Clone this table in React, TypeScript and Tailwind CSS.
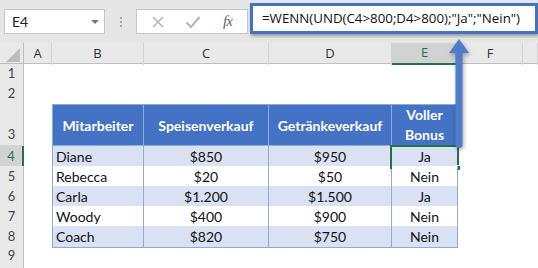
import React from "react";

const cols = "grid grid-cols-[24px_28px_92px_125px_123px_66px_65px_1fr]";
const letters = ["A", "B", "C", "D", "E", "F", ""];

const people = [
  { name: "Diane", food: "$850", drinks: "$950", bonus: "Ja" },
  { name: "Rebecca", food: "$20", drinks: "$50", bonus: "Nein" },
  { name: "Carla", food: "$1.200", drinks: "$1.500", bonus: "Ja" },
  { name: "Woody", food: "$400", drinks: "$900", bonus: "Nein" },
  { name: "Coach", food: "$820", drinks: "$750", bonus: "Nein" },
];

function RowHead({ n, active }: { n?: number; active?: boolean }) {
  return (
    <div
      className={`flex items-end justify-center pb-[1px] text-[13px] border-b border-[#d4d4d4] ${
        active
          ? "bg-[#d2d2d2] text-[#217346] border-r-2 border-r-[#217346]"
          : "bg-[#e9e9e9] text-[#444] border-r border-r-[#bdbdbd]"
      }`}
    >
      {n}
    </div>
  );
}

function Toolbar() {
  return (
    <div className="relative h-[43px] bg-[#e6e6e6] flex items-start pt-[9px] pl-[4px]">
      <div className="w-[101px] h-[25px] bg-white border border-[#c6c6c6] flex items-center justify-between pl-[7px] pr-[5px] text-[14px] text-[#222]">
        <span>E4</span>
        <span className="w-0 h-0 border-l-[4px] border-r-[4px] border-t-[4px] border-l-transparent border-r-transparent border-t-[#777]" />
      </div>
      <div className="w-[31px] h-[25px] flex flex-col items-center justify-center gap-[2px]">
        <span className="w-[2px] h-[2px] bg-[#a6a6a6]" />
        <span className="w-[2px] h-[2px] bg-[#a6a6a6]" />
        <span className="w-[2px] h-[2px] bg-[#a6a6a6]" />
      </div>
      <div className="w-[112px] h-[25px] bg-white border border-[#c6c6c6] flex items-center pl-[14px]">
        <svg width="14" height="14" viewBox="0 0 14 14" className="mr-[20px]">
          <path d="M2 2 L12 12 M12 2 L2 12" stroke="#b5b5b5" strokeWidth="1.6" />
        </svg>
        <svg width="16" height="14" viewBox="0 0 16 14" className="mr-[22px]">
          <path d="M1.5 7.5 L6 12 L14.5 2" stroke="#b5b5b5" strokeWidth="2" fill="none" />
        </svg>
        <span className="text-[15px] italic text-[#666] font-['Liberation_Serif',serif] tracking-[-1px]">
          fx
        </span>
      </div>
      {/* formula input, highlighted */}
      <div className="absolute left-[250px] top-[3px] w-[288px] h-[31px] bg-white border-[3px] border-[#4472c4] shadow-[1px_2px_3px_rgba(0,0,0,0.35)] flex items-center pl-[9px] text-[13.3px] text-[#111] font-['Open_Sans',sans-serif] whitespace-nowrap">
        =WENN(UND(C4&gt;800;D4&gt;800);"Ja";"Nein")
      </div>
    </div>
  );
}

export default function App() {
  return (
    <div className="relative w-[538px] h-[268px] overflow-hidden bg-white font-['Lato',sans-serif]">
      <Toolbar />

      {/* column letters */}
      <div className={`${cols} h-[21px] bg-[#e9e9e9] border-b border-[#bfbfbf] font-['Open_Sans',sans-serif] text-[13px] text-[#333]`}>
        <div className="relative border-r border-[#bdbdbd]">
          <svg width="14" height="14" viewBox="0 0 14 14" className="absolute right-[3px] bottom-[3px]">
            <path d="M14 0 L14 14 L0 14 Z" fill="#bdbdbd" />
          </svg>
        </div>
        {letters.map((l, i) => (
          <div
            key={i}
            className={`flex items-center justify-center border-r border-[#d4d4d4] ${
              l === "E" ? "bg-[#d2d2d2] text-[#217346] border-b-2 border-b-[#217346]" : ""
            }`}
          >
            {l}
          </div>
        ))}
      </div>

      {/* empty rows 1 and 2 */}
      {[1, 2].map((n) => (
        <div key={n} className={`${cols} h-[20px]`}>
          <RowHead n={n} />
        </div>
      ))}

      {/* table header */}
      <div className={`${cols} h-[42px]`}>
        <RowHead n={3} />
        <div />
        {["Mitarbeiter", "Speisenverkauf", "Getränkeverkauf"].map((h, i) => (
          <div
            key={h}
            className={`bg-[#4472c4] text-white font-bold text-[14px] flex items-center justify-center border-t border-r border-b border-[#8eaadb] ${
              i === 0 ? "border-l" : ""
            }`}
          >
            {h}
          </div>
        ))}
        <div className="bg-[#4472c4] text-white font-bold text-[14px] leading-[20px] flex flex-col items-center justify-center border-t border-r border-b border-[#8eaadb]">
          <span>Voller</span>
          <span>Bonus</span>
        </div>
      </div>

      {/* data rows */}
      {people.map((p, i) => {
        const bg = i % 2 === 0 ? "bg-[#d9e1f2]" : "bg-white";
        const cell = `${bg} border-r border-b border-[#8eaadb] flex items-center text-[14px] text-[#111]`;
        return (
          <div key={p.name} className={`${cols} h-[20px]`}>
            <RowHead n={i + 4} active={i === 0} />
            <div />
            <div className={`${cell} border-l pl-[3px]`}>{p.name}</div>
            <div className={`${cell} justify-center`}>{p.food}</div>
            <div className={`${cell} justify-center`}>{p.drinks}</div>
            <div className={`${cell} justify-center relative`}>
              {p.bonus}
              {i === 0 && (
                <>
                  <span className="absolute left-[-2px] top-[-1px] right-[-2px] bottom-[-2px] border-2 border-[#217346]" />
                  <span className="absolute right-[-4px] bottom-[-4px] w-[6px] h-[6px] bg-[#217346] border border-white" />
                </>
              )}
            </div>
          </div>
        );
      })}

      <div className={`${cols} h-[20px]`}>
        <RowHead n={9} />
      </div>
      <div className={`${cols} h-[20px]`}>
        <RowHead />
      </div>

      {/* pointer up to the formula */}
      <svg
        width="26"
        height="116"
        viewBox="0 0 26 116"
        className="absolute left-[447px] top-[37px] drop-shadow-[1px_2px_2px_rgba(0,0,0,0.35)]"
      >
        <path d="M12 2 L22 16 L15.5 16 L15.5 108 Q15.5 111 12 111 Q8.5 111 8.5 108 L8.5 16 L2 16 Z" fill="#4e7ccb" />
      </svg>
    </div>
  );
}
